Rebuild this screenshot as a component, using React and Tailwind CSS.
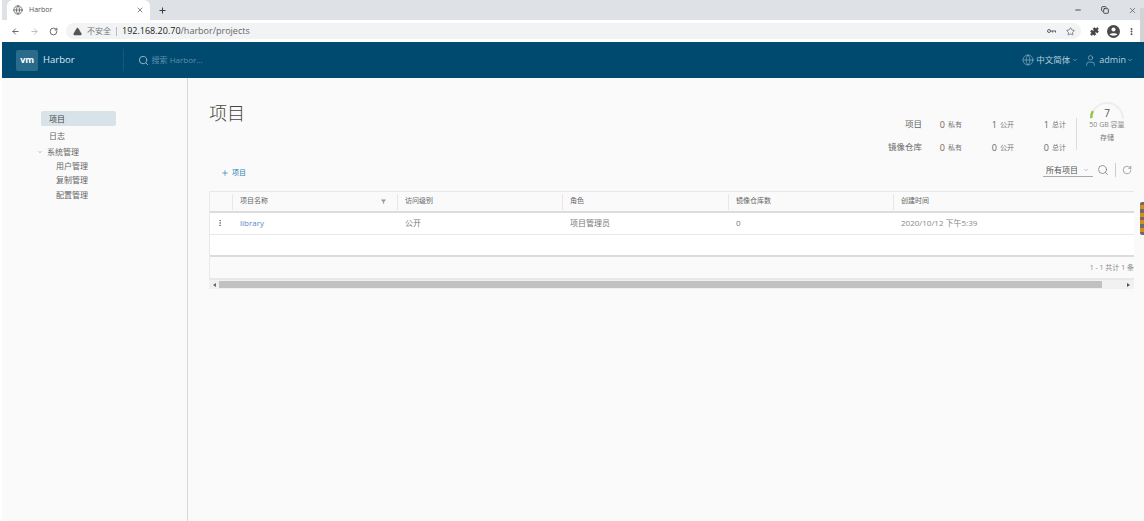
import React from "react";
import { ArrowLeft, ArrowRight, RotateCw, TriangleAlert, Star, Puzzle, MoreVertical, Minus, X, Plus, Copy, Search, Globe, User, ChevronDown, Filter } from "lucide-react";

const cjk = "font-['Open_Sans','Noto_Sans_CJK_SC',sans-serif]";

function Stat({ n, label, w }) {
  return (
    <div className={`flex items-center justify-end ${w}`}>
      <span className="text-[9px] leading-none text-[#666]">{n}</span>
      <span className="ml-[3px] text-[7px] leading-none text-[#777]">{label}</span>
    </div>
  );
}

function Head({ w, children, icon }) {
  return (
    <div className={`flex h-full items-center ${w}`}>
      <div className="flex h-[16px] flex-1 items-center justify-between border-l border-[#e8e8e8] pl-[7px] pr-[11px]">
        <span className="text-[7px] text-[#666]">{children}</span>
        {icon}
      </div>
    </div>
  );
}

export default function App() {
  return (
    <div className={`relative flex h-[521px] w-[1144px] flex-col overflow-hidden bg-white pl-[2px] ${cjk}`}>
      {/* tab strip */}
      <div className="flex h-[20px] shrink-0 bg-[#dee1e6] pl-[5px]">
        <div className="flex h-[20px] w-[143px] items-center rounded-t-[6px] bg-white pl-[6px] pr-[6px]">
          <Globe size={10} className="text-[#5f6368]" />
          <span className="ml-[6px] text-[7px] text-[#555]">Harbor</span>
          <X size={8} className="ml-auto text-[#444]" strokeWidth={2} />
        </div>
        <Plus size={9} className="ml-[8px] mt-[6px] text-[#333]" strokeWidth={2.5} />
        <div className="ml-auto flex items-center gap-[19px] pr-[7px] text-[#333]">
          <Minus size={8} strokeWidth={2.5} />
          <Copy size={8} strokeWidth={2.5} />
          <X size={9} strokeWidth={1.5} />
        </div>
      </div>
      {/* toolbar */}
      <div className="flex h-[22px] shrink-0 items-center bg-white pl-[9px] pr-[7px]">
        <ArrowLeft size={9} className="text-[#5f6368]" strokeWidth={2.5} />
        <ArrowRight size={9} className="ml-[10px] text-[#bbb]" strokeWidth={2.5} />
        <RotateCw size={9} className="ml-[10px] text-[#5f6368]" strokeWidth={2.5} />
        <div className="ml-[8px] flex h-[16px] w-[1015px] items-center rounded-full bg-[#f1f3f4] pl-[7px] pr-[6px]">
          <TriangleAlert size={9} fill="#555" className="text-[#555]" />
          <span className="ml-[5px] text-[8px] text-[#777]">不安全</span>
          <span className="ml-[5px] mr-[5px] h-[9px] w-px bg-[#bbb]" />
          <span className="text-[9px] text-[#222]">192.168.20.70<span className="text-[#666]">/harbor/projects</span></span>
          <svg width="9" height="6" viewBox="0 0 9 6" className="ml-auto text-[#5f6368]">
            <circle cx="2" cy="3" r="1.5" fill="none" stroke="currentColor" />
            <path d="M3.5 2.5H9V4.5H8V3.5H6V4.5H5V3.5H3.5Z" fill="currentColor" />
          </svg>
          <Star size={9} className="ml-[10px] text-[#5f6368]" strokeWidth={2} />
        </div>
        <Puzzle size={9} fill="#444" className="ml-[9px] text-[#444]" />
        <svg width="13" height="13" viewBox="0 0 13 13" className="ml-[8px]">
          <circle cx="6.5" cy="6.5" r="6.5" fill="#4a4a4a" />
          <circle cx="6.5" cy="4.6" r="2" fill="#fff" />
          <path d="M2.6 9.6C3.6 7.9 9.4 7.9 10.4 9.6C9.4 11 3.6 11 2.6 9.6Z" fill="#fff" />
        </svg>
        <MoreVertical size={9} className="ml-[7px] text-[#444]" strokeWidth={3} />
      </div>
      {/* header */}
      <header className="flex h-[36px] shrink-0 items-center bg-[#004a70] pl-[14px] pr-[11px] text-white">
        <div className="flex h-[21px] w-[22px] items-center justify-center rounded-[2px] bg-[#2a6a8a] text-[9px] font-bold tracking-tight">vm</div>
        <span className="ml-[5px] text-[9.5px] text-[#dfe8ed]">Harbor</span>
        <div className="ml-[48px] h-[22px] w-px bg-[#14587b]" />
        <Search size={11} className="ml-[14px] text-[#9fbccb]" />
        <span className="ml-[3px] text-[8px] text-[#5f8fa8]">搜索 Harbor...</span>
        <div className="ml-auto flex items-center text-[#b8cdd8]">
          <Globe size={12} strokeWidth={1} />
          <span className="ml-[2px] text-[8.5px]">中文简体</span>
          <ChevronDown size={6} className="ml-[2px]" />
          <User size={13} strokeWidth={1} className="ml-[6px]" />
          <span className="ml-[2px] text-[9px]">admin</span>
          <ChevronDown size={6} className="ml-[1px]" />
        </div>
      </header>
      {/* body */}
      <div className="flex min-h-0 flex-1 bg-[#fafafa]">
        <aside className="w-[186px] shrink-0 border-r border-[#d7d7d7] pl-[39px] pt-[33px] text-[8px] text-[#666]">
          <div className="flex h-[15px] w-[75px] items-center rounded-[2px] bg-[#d8e3e9] pl-[8px] text-[#444]">项目</div>
          <div className="mt-[2px] flex h-[15px] items-center pl-[8px]">日志</div>
          <div className="-ml-[4px] mt-[1px] flex h-[15px] items-center">
            <ChevronDown size={6} className="text-[#888]" />
            <span className="ml-[4px]">系统管理</span>
          </div>
          <div className="flex h-[14px] items-center pl-[15px]">用户管理</div>
          <div className="flex h-[14px] items-center pl-[15px]">复制管理</div>
          <div className="flex h-[15px] items-center pl-[15px]">配置管理</div>
        </aside>
        <main className="min-w-0 flex-1 pl-[21px] pr-[10px]">
          {/* title and stats */}
          <div className="flex h-[113px] items-start justify-between">
            <div className="flex h-full flex-col">
              <h1 className="mt-[22px] text-[18px] font-light leading-[26px] text-[#444]">项目</h1>
              <div className="mt-auto flex items-center pb-[13px] pl-[12px] text-[#2a7fb0]">
                <Plus size={8} />
                <span className="ml-[3px] text-[7px]">项目</span>
              </div>
            </div>
            <div className="flex flex-col items-end">
              <div className="mt-[35px] flex h-[46px] items-start">
                <div className="flex flex-col">
                  <div className="flex h-[23px] items-center">
                    <span className="w-[40px] whitespace-nowrap text-right text-[8.5px] text-[#666]">项目</span>
                    <Stat n="0" label="私有" w="w-[40px]" />
                    <Stat n="1" label="公开" w="w-[52px]" />
                    <Stat n="1" label="总计" w="w-[52px]" />
                  </div>
                  <div className="flex h-[23px] items-center">
                    <span className="w-[40px] whitespace-nowrap text-right text-[8.5px] text-[#666]">镜像仓库</span>
                    <Stat n="0" label="私有" w="w-[40px]" />
                    <Stat n="0" label="公开" w="w-[52px]" />
                    <Stat n="0" label="总计" w="w-[52px]" />
                  </div>
                </div>
                <div className="ml-[10px] mt-[5px] h-[32px] w-px bg-[#ddd]" />
                <div className="relative -mt-[13px] ml-[5px] mr-[2px] flex w-[50px] flex-col items-center pt-[8px]">
                  <svg width="36" height="20" viewBox="0 0 36 20" className="absolute left-[7px] top-0">
                    <path d="M2 19 A16 16 0 0 1 34 19" fill="none" stroke="#eeeeee" strokeWidth="2" />
                    <path d="M2.2 18 A16 16 0 0 1 3.8 11" fill="none" stroke="#8fc74a" strokeWidth="2.5" />
                  </svg>
                  <span className="text-[10px] leading-[11px] text-[#555]">7</span>
                  <span className="mt-[1px] whitespace-nowrap text-[7px] leading-[9px] text-[#888]">50 GB 容量</span>
                  <span className="mt-[4px] text-[7px] leading-[9px] text-[#777]">存储</span>
                </div>
              </div>
              <div className="mr-[2px] mt-[4px] flex h-[14px] items-center">
                <div className="flex h-[14px] w-[50px] items-center justify-between border-b border-[#aaa] pl-[3px] pr-[4px]">
                  <span className="text-[8px] text-[#555]">所有项目</span>
                  <ChevronDown size={6} className="text-[#888]" />
                </div>
                <Search size={12} className="ml-[4px] text-[#777]" strokeWidth={1.5} />
                <div className="mx-[6px] h-[14px] w-px bg-[#ccc]" />
                <RotateCw size={10} className="text-[#777]" strokeWidth={1.5} />
              </div>
            </div>
          </div>
          {/* table */}
          <div className="border border-[#e8e8e8] border-r-0">
            <div className="flex h-[21px] items-center border-b-2 border-[#dcdcdc] bg-[#fafafa]">
              <div className="w-[22px] shrink-0" />
              <Head w="w-[165px]" icon={<Filter size={5} fill="#999" className="text-[#999]" />}>项目名称</Head>
              <Head w="w-[165px]">访问级别</Head>
              <Head w="w-[166px]">角色</Head>
              <Head w="w-[165px]">镜像仓库数</Head>
              <Head w="flex-1">创建时间</Head>
            </div>
            <div className="flex h-[22px] items-center border-b border-[#e8e8e8] bg-white pb-[2px] text-[8px] text-[#777]">
              <div className="flex w-[22px] shrink-0 justify-center pr-[2px]">
                <MoreVertical size={8} className="text-[#555]" strokeWidth={2} />
              </div>
              <span className="w-[165px] pl-[8px] text-[#5b87c0]">library</span>
              <span className="w-[165px] pl-[8px]">公开</span>
              <span className="w-[166px] pl-[8px]">项目管理员</span>
              <span className="w-[165px] pl-[8px]">0</span>
              <span className="flex-1 pl-[8px] text-[#888]">2020/10/12 下午5:39</span>
            </div>
            <div className="h-[22px] border-b-2 border-[#dcdcdc] bg-white" />
            <div className="flex h-[21px] items-center justify-end bg-[#fafafa] pt-[1px] text-[7px] text-[#888]">1 - 1 共计 1 条</div>
          </div>
          {/* scrollbar */}
          <div className="flex h-[10px] items-center border-t border-[#e8e8e8] bg-[#f1f1f1]">
            <span className="ml-[4px] h-0 w-0 border-y-[2px] border-r-[3px] border-y-transparent border-r-[#666]" />
            <div className="ml-[3px] h-[7px] w-[883px] bg-[#c1c1c1]" />
            <span className="ml-auto mr-[4px] h-0 w-0 border-y-[2px] border-l-[3px] border-y-transparent border-l-[#555]" />
          </div>
        </main>
      </div>
      {/* desktop edges showing past the window */}
      <div className="absolute right-0 top-[8px] h-[34px] w-[4px] bg-[#d2d3d5]" />
      <div className="absolute right-0 top-[202px] flex h-[33px] w-[4px] flex-col justify-evenly rounded-l-[2px] bg-[#6b6b6b]">
        <div className="h-[4px] bg-[#d98a1e]" />
        <div className="h-[4px] bg-[#d98a1e]" />
        <div className="h-[4px] bg-[#d98a1e]" />
        <div className="h-[4px] bg-[#d98a1e]" />
      </div>
    </div>
  );
}
